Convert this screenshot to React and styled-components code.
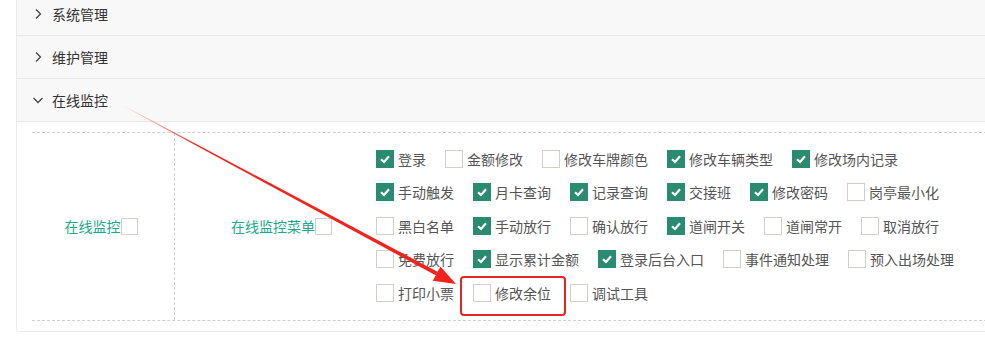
import React from 'react'
import styled, { createGlobalStyle } from 'styled-components'

const GlobalStyle = createGlobalStyle`
  body {
    margin: 0;
    background: #fff;
    font-family: "Noto Sans CJK SC", "Noto Sans", sans-serif;
    overflow: hidden;
  }
`

const groups = [
  { title: '系统管理', open: false },
  { title: '维护管理', open: false },
  { title: '在线监控', open: true },
]

const perms = [
  ['登录', true], ['金额修改', false], ['修改车牌颜色', false], ['修改车辆类型', true], ['修改场内记录', true],
  ['手动触发', true], ['月卡查询', true], ['记录查询', true], ['交接班', true], ['修改密码', true], ['岗亭最小化', false],
  ['黑白名单', false], ['手动放行', true], ['确认放行', false], ['道闸开关', true], ['道闸常开', false], ['取消放行', false],
  ['免费放行', false], ['显示累计金额', true], ['登录后台入口', true], ['事件通知处理', false], ['预入出场处理', false],
  ['打印小票', false], ['修改余位', false], ['调试工具', false],
]

const Chevron = ({ open }) => (
  <svg width='16' height='16' viewBox='0 0 16 16' fill='none' stroke='#444' strokeWidth='1.3'>
    {open ? <polyline points='3.5,6 8,10.5 12.5,6' /> : <polyline points='6,3.5 10.5,8 6,12.5' />}
  </svg>
)

const Box = ({ checked, size }) => (
  <CheckBox $checked={checked} $size={size}>
    {checked && (
      <svg width='12' height='12' viewBox='0 0 12 12' fill='none' stroke='#fff' strokeWidth='2.2'>
        <polyline points='2,6.2 5,9 10,3.2' />
      </svg>
    )}
  </CheckBox>
)

const App = () => {
  return (
    <>
      <GlobalStyle />
      <Wrapper>
        {groups.map((g) => (
          <div key={g.title}>
            <Header>
              <Chevron open={g.open} />
              <span>{g.title}</span>
            </Header>
            {g.open && (
              <Body>
                <Table>
                  <Cell $divider>
                    <GroupLabel>在线监控</GroupLabel>
                    <Box size={17} />
                  </Cell>
                  <Cell $shift>
                    <GroupLabel>在线监控菜单</GroupLabel>
                    <Box size={17} />
                  </Cell>
                  <Options>
                    {perms.map(([name, on]) => (
                      <Option key={name}>
                        <Box checked={on} size={18} />
                        <span>{name}</span>
                      </Option>
                    ))}
                  </Options>
                </Table>
              </Body>
            )}
          </div>
        ))}
      </Wrapper>
      <Marks width='985' height='347' viewBox='0 0 985 347'>
        <defs>
          <linearGradient id='arrowFade' gradientUnits='userSpaceOnUse' x1='122' y1='105' x2='456' y2='284'>
            <stop offset='0' stopColor='#f2231d' stopOpacity='0' />
            <stop offset='0.22' stopColor='#f2231d' stopOpacity='1' />
            <stop offset='1' stopColor='#f2231d' stopOpacity='1' />
          </linearGradient>
        </defs>
        <polygon
          points='121.86,105.26 435.66,275.36 437.54,271.84 122.14,104.74'
          fill='url(#arrowFade)'
        />
        <polygon points='432.8,280.65 456,284 440.4,266.55' fill='#f2231d' />
        <rect x='461' y='277' width='104' height='38' rx='3' fill='none' stroke='#ea2420' strokeWidth='2' />
      </Marks>
    </>
  )
}

const Wrapper = styled.div`
  width: 1000px;
  margin: -7px 0 0 16px;
  border: 1px solid #ebebeb;
  border-top: none;
  border-radius: 0 0 3px 3px;
  background: #fff;
`

const Header = styled.div`
  height: 42px;
  display: flex;
  align-items: center;
  gap: 6px;
  padding-left: 13px;
  background: #f8f8f8;
  border-bottom: 1px solid #e9e9e9;
  font-size: 14px;
  color: #333;
`

const Body = styled.div`
  padding: 10px 15px 10px 15px;
`

const Table = styled.div`
  display: grid;
  grid-template-columns: 143px 200px 1fr;
  border-top: 1px dashed #cfcfcf;
  border-bottom: 1px dashed #cfcfcf;
`

const Cell = styled.div`
  display: flex;
  align-items: center;
  justify-content: center;
  padding-left: ${(p) => (p.$shift ? '13px' : '0')};
  padding-right: ${(p) => (p.$divider ? '4px' : '0')};
  border-right: ${(p) => (p.$divider ? '1px dashed #cfcfcf' : 'none')};
`

const GroupLabel = styled.span`
  font-size: 14px;
  color: #1aa98a;
`

const CheckBox = styled.span`
  box-sizing: border-box;
  width: ${(p) => p.$size}px;
  height: ${(p) => p.$size}px;
  flex: none;
  display: inline-flex;
  align-items: center;
  justify-content: center;
  background: ${(p) => (p.$checked ? '#2b8b71' : '#fff')};
  border: 1px solid ${(p) => (p.$checked ? '#2b8b71' : '#d4cfcb')};
`

const Options = styled.div`
  display: flex;
  flex-wrap: wrap;
  align-content: flex-start;
  padding: 9px 25px 10px 1px;
`

const Option = styled.label`
  height: 33.5px;
  display: inline-flex;
  align-items: center;
  gap: 4px;
  margin-right: 19px;
  font-size: 14px;
  color: #555;
`

const Marks = styled.svg`
  position: absolute;
  left: 0;
  top: 0;
  pointer-events: none;
`

export default App
